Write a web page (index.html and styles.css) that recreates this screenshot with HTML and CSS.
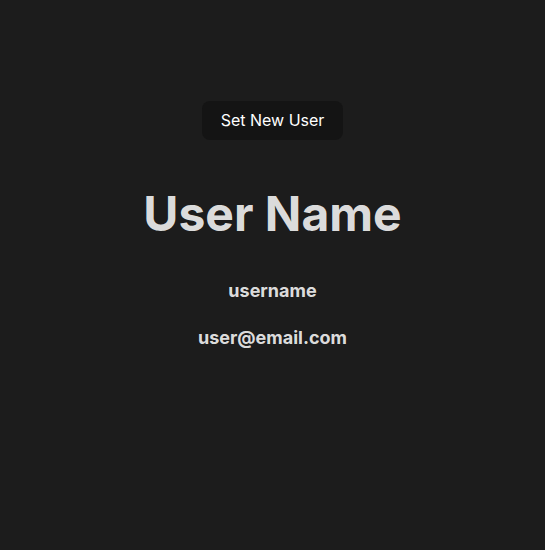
FILE: index.html
```html
<!DOCTYPE html>
<html>
<head>
<meta charset="utf-8">
<link rel="stylesheet" href="styles.css">
</head>
<body>
<main class="app">
  <button class="btn">Set New User</button>
  <h1 class="name">User Name</h1>
  <h3 class="sub first">username</h3>
  <h3 class="sub">user@email.com</h3>
</main>
</body>
</html>
```
FILE: styles.css
```css
html, body {
  margin: 0;
  padding: 0;
  background: #1c1c1c;
  font-family: Inter, "Liberation Sans", sans-serif;
  color: rgba(255, 255, 255, 0.87);
}
.app {
  display: flex;
  flex-direction: column;
  align-items: center;
  padding-top: 101px;
}
.btn {
  font-family: inherit;
  font-size: 16px;
  font-weight: 400;
  color: #ffffff;
  background: #141414;
  border: 1px solid transparent;
  border-radius: 8px;
  padding: 9px 18px;
  line-height: 19px;
}
.name {
  font-size: 48px;
  line-height: 1.1;
  font-weight: 700;
  margin: 48px 0 0;
}
.sub {
  font-size: 18px;
  line-height: 22px;
  font-weight: 700;
  margin: 25px 0 0;
}
.sub.first {
  margin-top: 39px;
}
```
